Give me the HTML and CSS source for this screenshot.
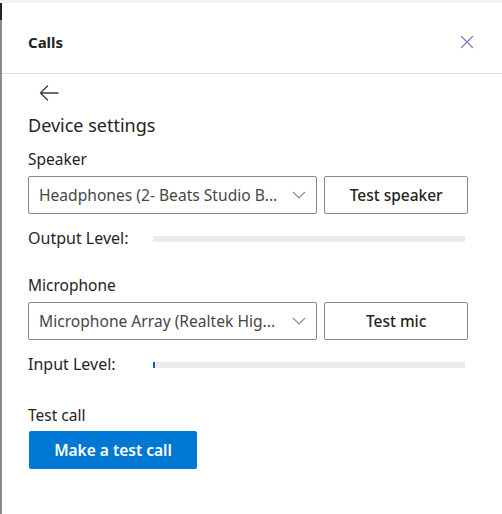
FILE: index.html
```html
<!DOCTYPE html>
<html>
<head>
<meta charset="utf-8">
<link rel="stylesheet" href="styles.css">
</head>
<body>
<div class="window">
  <header class="header">
    <h1 class="title">Calls</h1>
    <button class="close" aria-label="Close">
      <svg width="14" height="14" viewBox="0 0 14 14"><path d="M1.5 1.5 L12.5 12.5 M12.5 1.5 L1.5 12.5" stroke="#7b7dc4" stroke-width="1.3" fill="none" stroke-linecap="round"/></svg>
    </button>
  </header>
  <main class="content">
    <button class="back" aria-label="Back">
      <svg width="22" height="18" viewBox="0 0 22 18"><path d="M20 9 H2.5 M9.5 2 L2.5 9 L9.5 16" stroke="#3b3a39" stroke-width="1.3" fill="none" stroke-linecap="round" stroke-linejoin="round"/></svg>
    </button>
    <h2 class="heading">Device settings</h2>

    <div class="label label-first">Speaker</div>
    <div class="device-row">
      <div class="select">
        <span class="select-text">Headphones (2- Beats Studio B...</span>
        <svg class="chev" width="14" height="8" viewBox="0 0 14 8"><path d="M1 1 L7 7 L13 1" stroke="#8a8886" stroke-width="1.1" fill="none"/></svg>
      </div>
      <button class="test-btn">Test speaker</button>
    </div>
    <div class="level-row">
      <span class="level-label">Output Level:</span>
      <div class="meter"></div>
    </div>

    <div class="label label-section">Microphone</div>
    <div class="device-row">
      <div class="select">
        <span class="select-text">Microphone Array (Realtek Hig...</span>
        <svg class="chev" width="14" height="8" viewBox="0 0 14 8"><path d="M1 1 L7 7 L13 1" stroke="#8a8886" stroke-width="1.1" fill="none"/></svg>
      </div>
      <button class="test-btn">Test mic</button>
    </div>
    <div class="level-row">
      <span class="level-label">Input Level:</span>
      <div class="meter"><div class="meter-fill"></div></div>
    </div>

    <div class="label label-call">Test call</div>
    <button class="primary">Make a test call</button>
  </main>
</div>
</body>
</html>
```
FILE: styles.css
```css
* { box-sizing: border-box; }
html, body { margin: 0; padding: 0; }
body {
  background: #f3f3f3;
  font-family: "Noto Sans", "Liberation Sans", sans-serif;
  color: #252423;
  width: 502px;
  height: 514px;
  overflow: hidden;
}
.window {
  margin-top: 3px;
  height: 511px;
  background: #ffffff;
  border-left: 2px solid #8c8c8c;
  border-image: linear-gradient(#1e2235 0, #1e2235 18px, #8c8c8c 18px) 1;
}
.header {
  display: flex;
  align-items: center;
  justify-content: space-between;
  height: 71px;
  padding: 7px 28px 0 26px;
  border-bottom: 1px solid #e1dfdd;
}
.title {
  margin: 0;
  font-size: 15px;
  font-weight: 700;
  line-height: 20px;
}
.close {
  border: 0;
  background: none;
  padding: 0;
  width: 14px;
  height: 14px;
  display: flex;
  margin-top: 1px;
}
.content {
  padding: 9px 34px 0 26px;
  display: flex;
  flex-direction: column;
  align-items: flex-start;
}
.back {
  border: 0;
  background: none;
  padding: 0;
  margin-left: 10px;
  height: 20px;
  display: flex;
  align-items: center;
}
.heading {
  margin: 10px 0 0;
  font-size: 18px;
  font-weight: 400;
  line-height: 24px;
  color: #252423;
}
.label {
  font-size: 15.5px;
  line-height: 20px;
  color: #252423;
}
.label-first { margin-top: 12px; }
.label-section { margin-top: 27px; }
.label-call { margin-top: 31px; }
.device-row {
  display: flex;
  gap: 7px;
  margin-top: 7px;
  width: 100%;
}
.select {
  width: 290px;
  height: 38px;
  border: 1px solid #8a8886;
  border-radius: 2px;
  display: flex;
  align-items: center;
  justify-content: space-between;
  padding: 0 10px 0 10px;
}
.select-text {
  font-size: 15.6px;
  color: #484644;
  white-space: nowrap;
}
.chev { flex: none; }
.test-btn {
  width: 144px;
  height: 38px;
  border: 1px solid #8a8886;
  border-radius: 2px;
  background: #fff;
  font-family: inherit;
  font-size: 15.5px;
  font-weight: 500;
  color: #252423;
}
.level-row {
  display: flex;
  align-items: center;
  margin-top: 14px;
  height: 20px;
  width: 100%;
}
.level-label {
  width: 125px;
  font-size: 16px;
  color: #252423;
  line-height: 20px;
}
.meter {
  width: 312px;
  height: 6px;
  background: #ebebeb;
  margin-top: 2px;
  display: flex;
}
.meter-fill {
  width: 2px;
  height: 6px;
  background: #0f5fb5;
}
.primary {
  margin-top: 6px;
  margin-left: 1px;
  width: 168px;
  height: 38px;
  border: 0;
  border-radius: 2px;
  background: #0078d4;
  color: #ffffff;
  font-family: inherit;
  font-size: 15.5px;
  font-weight: 600;
}
```
